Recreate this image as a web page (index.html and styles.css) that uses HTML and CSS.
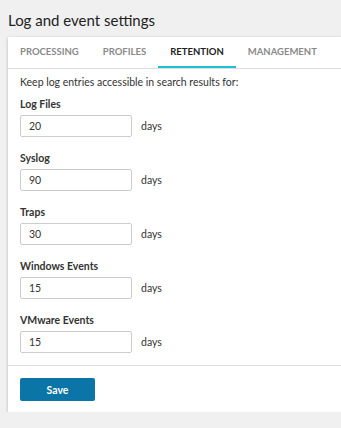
FILE: index.html
```html
<!DOCTYPE html>
<html lang="en">
<head>
    <meta charset="UTF-8">
    <title>Log and event settings</title>
    <link rel="stylesheet" href="styles.css">
</head>
<body>
    <h1 class="page-title">Log and event settings</h1>
    <div class="card">
        <div class="tabs">
            <div class="tab">Processing</div>
            <div class="tab">Profiles</div>
            <div class="tab active">Retention</div>
            <div class="tab">Management</div>
        </div>
        <div class="card-body">
            <p class="intro">Keep log entries accessible in search results for:</p>
            <div class="field">
                <label for="log-files">Log Files</label>
                <div class="field-row">
                    <input type="text" id="log-files" value="20">
                    <span class="unit">days</span>
                </div>
            </div>
            <div class="field">
                <label for="syslog">Syslog</label>
                <div class="field-row">
                    <input type="text" id="syslog" value="90">
                    <span class="unit">days</span>
                </div>
            </div>
            <div class="field">
                <label for="traps">Traps</label>
                <div class="field-row">
                    <input type="text" id="traps" value="30">
                    <span class="unit">days</span>
                </div>
            </div>
            <div class="field">
                <label for="windows-events">Windows Events</label>
                <div class="field-row">
                    <input type="text" id="windows-events" value="15">
                    <span class="unit">days</span>
                </div>
            </div>
            <div class="field">
                <label for="vmware-events">VMware Events</label>
                <div class="field-row">
                    <input type="text" id="vmware-events" value="15">
                    <span class="unit">days</span>
                </div>
            </div>
        </div>
        <div class="card-footer">
            <button class="btn-primary">Save</button>
        </div>
    </div>
</body>
</html>
```

FILE: styles.css
```css
body {
    font-family: Lato, "Open Sans", Arial, sans-serif;
    font-size: 10.5px;
    color: #333;
    margin: 0;
    background-color: #f0f0f0;
}
.page-title {
    margin: 0;
    padding: 10px 8px 6px;
    font-size: 15px;
    font-weight: 400;
    line-height: 21px;
    color: #222;
}
.card {
    margin-left: 8px;
    background-color: #fff;
    box-shadow: 0 1px 3px rgba(0, 0, 0, 0.25);
}
.tabs {
    display: flex;
    border-bottom: 1px solid #ddd;
}
.tab {
    padding: 1px 12px 0;
    height: 28px;
    line-height: 28px;
    border-bottom: 2px solid transparent;
    text-transform: uppercase;
    font-size: 9.5px;
    font-weight: 700;
    color: #8a8a8a;
}
.tab.active {
    color: #222;
    border-bottom-color: #1ebfd0;
}
.card-body {
    padding: 6px 12px 12px;
    border-bottom: 1px solid #ddd;
}
.intro {
    margin: 0;
    line-height: 15px;
}
.field {
    margin-top: 7px;
}
.field + .field {
    margin-top: 14px;
}
label {
    display: block;
    font-weight: 700;
    line-height: 14px;
    margin-bottom: 4px;
}
.field-row {
    display: flex;
    align-items: center;
    gap: 9px;
}
input {
    box-sizing: border-box;
    width: 112px;
    height: 22px;
    padding: 0 8px;
    border: 1px solid #ccc;
    border-radius: 2px;
    font-family: inherit;
    font-size: 10.5px;
    color: #333;
}
.card-footer {
    padding: 12px 12px 11px;
}
.btn-primary {
    width: 75px;
    height: 23px;
    border: none;
    border-radius: 2px;
    background-color: #0a75a6;
    color: #fff;
    font-family: inherit;
    font-size: 10.5px;
    font-weight: 700;
    cursor: pointer;
}
```
